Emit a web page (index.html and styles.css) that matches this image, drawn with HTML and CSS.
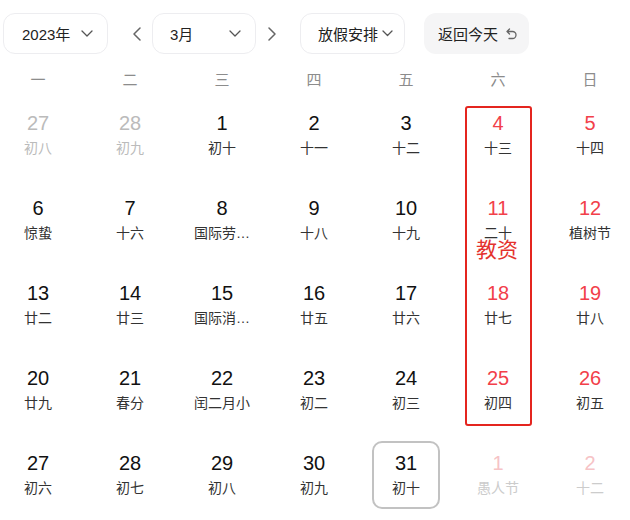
FILE: index.html
```html
<!DOCTYPE html>
<html>
<head>
    <meta charset="utf-8">
    <title>万年历</title>
    <link rel="stylesheet" href="styles.css">
</head>
<body>
    <div class="calendar">
        <div class="toolbar">
            <div class="select year-select">
                <span>2023年</span>
                <svg class="chevron" width="12" height="7" viewBox="0 0 12 7"><path d="M1 1 L6 6 L11 1" /></svg>
            </div>
            <div class="arrow prev">
                <svg width="9" height="14" viewBox="0 0 9 14"><path d="M8 1 L2 7 L8 13" /></svg>
            </div>
            <div class="select month-select">
                <span>3月</span>
                <svg class="chevron" width="12" height="7" viewBox="0 0 12 7"><path d="M1 1 L6 6 L11 1" /></svg>
            </div>
            <div class="arrow next">
                <svg width="9" height="14" viewBox="0 0 9 14"><path d="M1 1 L7 7 L1 13" /></svg>
            </div>
            <div class="select holiday-select">
                <span>放假安排</span>
                <svg class="chevron small" width="11" height="7" viewBox="0 0 11 7"><path d="M1 1 L5.5 5.5 L10 1" /></svg>
            </div>
            <div class="today-btn">
                <span>返回今天</span>
                <svg class="back-icon" width="11" height="12" viewBox="0 0 11 12"><path d="M3.5 1 L1 3.5 L3.5 6 M1 3.5 H6.5 A3.5 3.5 0 0 1 6.5 10.5 H3" /></svg>
            </div>
        </div>

        <div class="week-head">
            <div>一</div><div>二</div><div>三</div><div>四</div><div>五</div><div>六</div><div>日</div>
        </div>

        <div class="days-wrap">
            <div class="days" id="days"></div>
            <div class="mark-box"></div>
            <div class="mark-text">教资</div>
        </div>
    </div>

    <script>
        // 三月日历数据：[日期, 农历/节日, 类型]
        const days = [
            ['27', '初八', 'other'], ['28', '初九', 'other'], ['1', '初十'], ['2', '十一'], ['3', '十二'], ['4', '十三', 'weekend'], ['5', '十四', 'weekend'],
            ['6', '惊蛰'], ['7', '十六'], ['8', '国际劳…'], ['9', '十八'], ['10', '十九'], ['11', '二十', 'weekend'], ['12', '植树节', 'weekend'],
            ['13', '廿二'], ['14', '廿三'], ['15', '国际消…'], ['16', '廿五'], ['17', '廿六'], ['18', '廿七', 'weekend'], ['19', '廿八', 'weekend'],
            ['20', '廿九'], ['21', '春分'], ['22', '闰二月小'], ['23', '初二'], ['24', '初三'], ['25', '初四', 'weekend'], ['26', '初五', 'weekend'],
            ['27', '初六'], ['28', '初七'], ['29', '初八'], ['30', '初九'], ['31', '初十', 'today'], ['1', '愚人节', 'other weekend'], ['2', '十二', 'other weekend']
        ];

        document.getElementById('days').innerHTML = days.map(d => `
            <div class="day ${d[2] || ''}">
                <div class="num">${d[0]}</div>
                <div class="lunar">${d[1]}</div>
            </div>
        `).join('');
    </script>
</body>
</html>
```

FILE: styles.css
```css
body {
    margin: 0;
    background: #fff;
    font-family: Arial, "Liberation Sans", "Noto Sans CJK SC", sans-serif;
    color: #222;
}
.calendar {
    width: 630px;
}
.toolbar {
    display: flex;
    align-items: center;
    padding: 13px 0 0 3px;
    height: 41px;
}
.select {
    box-sizing: border-box;
    height: 41px;
    width: 105px;
    border: 1px solid #ededf0;
    border-radius: 12px;
    display: flex;
    align-items: center;
    justify-content: space-between;
    font-size: 15px;
    color: #222;
}
.year-select {
    padding: 0 14px 0 18px;
}
.month-select {
    width: 104px;
    padding: 0 14px 0 17px;
}
.holiday-select {
    padding: 0 11px 0 17px;
}
.chevron path,
.arrow path,
.back-icon path {
    fill: none;
    stroke: #555;
    stroke-width: 1.3;
    stroke-linecap: round;
    stroke-linejoin: round;
}
.arrow {
    width: 14px;
    display: flex;
    justify-content: center;
}
.arrow path {
    stroke: #666;
    stroke-width: 1.5;
}
.prev {
    margin: 0 9px 0 21px;
}
.next {
    margin: 0 21px 0 9px;
}
.today-btn {
    margin-left: 19px;
    height: 41px;
    width: 105px;
    box-sizing: border-box;
    padding-left: 14px;
    border-radius: 12px;
    background: #f5f5f6;
    display: flex;
    align-items: center;
    font-size: 15px;
    color: #222;
}
.back-icon {
    margin-left: 8px;
}
.back-icon path {
    stroke: #666;
}
.week-head {
    display: grid;
    grid-template-columns: repeat(7, 68px);
    column-gap: 24px;
    padding: 0 4px;
    margin-top: 16px;
    height: 20px;
    line-height: 20px;
    text-align: center;
    font-size: 15px;
    color: #8c8c8c;
}
.days-wrap {
    position: relative;
    margin-top: 11px;
}
.days {
    display: grid;
    grid-template-columns: repeat(7, 68px);
    grid-auto-rows: 68px;
    column-gap: 24px;
    row-gap: 17px;
    padding: 0 4px;
}
.day {
    box-sizing: border-box;
    padding-top: 11px;
    text-align: center;
    border-radius: 10px;
}
.num {
    font-size: 20px;
    line-height: 22px;
    color: #111;
}
.lunar {
    margin-top: 5px;
    font-size: 14px;
    line-height: 18px;
    color: #333;
    white-space: nowrap;
}
.day.weekend .num {
    color: #f2404a;
}
.day.other .num,
.day.other .lunar {
    color: #bbb;
}
.day.other.weekend .num {
    color: #f6c3c6;
}
.day.other.weekend .lunar {
    color: #ccc;
}
.day.today {
    border: 2px solid #c2c2c2;
    padding-top: 9px;
}
.mark-box {
    position: absolute;
    left: 465px;
    top: 5px;
    width: 67px;
    height: 320px;
    box-sizing: border-box;
    border: 2.5px solid #e4251f;
    border-radius: 3px;
}
.mark-text {
    position: absolute;
    left: 476px;
    top: 137px;
    font-size: 21px;
    line-height: 24px;
    color: #e4322d;
}
```
